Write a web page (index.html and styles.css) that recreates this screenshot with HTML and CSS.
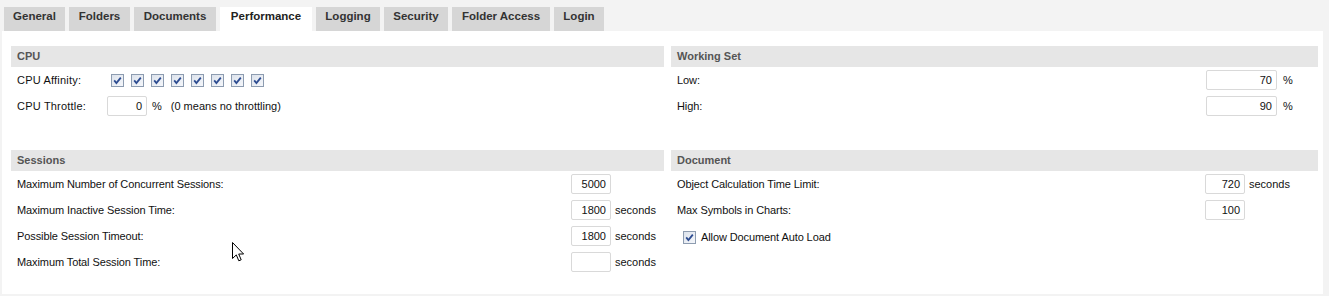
FILE: index.html
```html
<!DOCTYPE html>
<html>
<head>
<meta charset="utf-8">
<link rel="stylesheet" href="styles.css">
</head>
<body>
<div class="tabs">
  <div class="tab t-general">General</div>
  <div class="tab t-folders">Folders</div>
  <div class="tab t-documents">Documents</div>
  <div class="tab t-performance active">Performance</div>
  <div class="tab t-logging">Logging</div>
  <div class="tab t-security">Security</div>
  <div class="tab t-access">Folder Access</div>
  <div class="tab t-login">Login</div>
</div>
<div class="panel">
  <div class="grid">
    <section class="sec">
      <div class="hdr">CPU</div>
      <div class="row">
        <span class="lbl cpu-lbl">CPU Affinity:</span>
        <span class="cbs">
          <span class="cb"><svg viewBox="0 0 13 13"><path d="M3.2 6.4 L5.4 9 L9.8 3.6" /></svg></span>
          <span class="cb"><svg viewBox="0 0 13 13"><path d="M3.2 6.4 L5.4 9 L9.8 3.6" /></svg></span>
          <span class="cb"><svg viewBox="0 0 13 13"><path d="M3.2 6.4 L5.4 9 L9.8 3.6" /></svg></span>
          <span class="cb"><svg viewBox="0 0 13 13"><path d="M3.2 6.4 L5.4 9 L9.8 3.6" /></svg></span>
          <span class="cb"><svg viewBox="0 0 13 13"><path d="M3.2 6.4 L5.4 9 L9.8 3.6" /></svg></span>
          <span class="cb"><svg viewBox="0 0 13 13"><path d="M3.2 6.4 L5.4 9 L9.8 3.6" /></svg></span>
          <span class="cb"><svg viewBox="0 0 13 13"><path d="M3.2 6.4 L5.4 9 L9.8 3.6" /></svg></span>
          <span class="cb"><svg viewBox="0 0 13 13"><path d="M3.2 6.4 L5.4 9 L9.8 3.6" /></svg></span>
        </span>
      </div>
      <div class="row">
        <span class="lbl cpu-lbl">CPU Throttle:</span>
        <span class="inp w40">0</span>
        <span class="pct">%</span>
        <span class="note">(0 means no throttling)</span>
      </div>
    </section>
    <section class="sec">
      <div class="hdr">Working Set</div>
      <div class="row">
        <span class="lbl grow">Low:</span>
        <span class="inp w71">70</span>
        <span class="unit u-ws">%</span>
      </div>
      <div class="row">
        <span class="lbl grow">High:</span>
        <span class="inp w71">90</span>
        <span class="unit u-ws">%</span>
      </div>
    </section>
    <section class="sec">
      <div class="hdr">Sessions</div>
      <div class="row">
        <span class="lbl grow">Maximum Number of Concurrent Sessions:</span>
        <span class="inp w40">5000</span>
        <span class="unit u-ses"></span>
      </div>
      <div class="row">
        <span class="lbl grow">Maximum Inactive Session Time:</span>
        <span class="inp w40">1800</span>
        <span class="unit u-ses">seconds</span>
      </div>
      <div class="row">
        <span class="lbl grow">Possible Session Timeout:</span>
        <span class="inp w40">1800</span>
        <span class="unit u-ses">seconds</span>
      </div>
      <div class="row">
        <span class="lbl grow">Maximum Total Session Time:</span>
        <span class="inp w40"></span>
        <span class="unit u-ses">seconds</span>
      </div>
    </section>
    <section class="sec">
      <div class="hdr">Document</div>
      <div class="row">
        <span class="lbl grow">Object Calculation Time Limit:</span>
        <span class="inp w40">720</span>
        <span class="unit u-doc">seconds</span>
      </div>
      <div class="row">
        <span class="lbl grow">Max Symbols in Charts:</span>
        <span class="inp w40">100</span>
        <span class="unit u-doc"></span>
      </div>
      <div class="row">
        <span class="chk-wrap">
          <span class="cb"><svg viewBox="0 0 13 13"><path d="M3.2 6.4 L5.4 9 L9.8 3.6" /></svg></span>
          <span class="chk-lbl">Allow Document Auto Load</span>
        </span>
      </div>
    </section>
  </div>
</div>
<svg class="cursor" width="13" height="21" viewBox="0 0 13 21"><path d="M0.5 0.5 L0.5 16.5 L4.3 12.9 L6.8 18.8 L9.2 17.8 L6.7 12 L11.6 12 Z" fill="#fff" stroke="#000" stroke-width="1" stroke-linejoin="miter"/></svg>
</body>
</html>
```

FILE: styles.css
```css
html, body {
  margin: 0;
  padding: 0;
}
body {
  background: #f3f3f3;
  font-family: "Liberation Sans", Arial, sans-serif;
  font-size: 11px;
  color: #111;
  width: 1329px;
  height: 296px;
  position: relative;
  overflow: hidden;
}
.tabs {
  display: flex;
  gap: 4px;
  padding: 7px 0 0 4px;
  height: 24px;
}
.tab {
  background: #d6d6d6;
  color: #333;
  font-weight: bold;
  font-size: 11.5px;
  height: 24px;
  line-height: 19px;
  text-align: center;
  box-sizing: border-box;
}
.t-general { width: 61px; }
.t-folders { width: 61px; }
.t-documents { width: 82px; }
.t-performance { width: 92px; }
.t-logging { width: 64px; }
.t-security { width: 64px; }
.t-access { width: 98px; }
.t-login { width: 50px; }
.tab.active {
  background: #fff;
  color: #222;
}
.panel {
  background: #fff;
  margin-left: 2px;
  width: 1321px;
  height: 263px;
  box-sizing: border-box;
  padding: 15px 5px 0 9px;
}
.grid {
  display: grid;
  grid-template-columns: 653px 647px;
  grid-template-rows: 104px auto;
  column-gap: 7px;
}
.hdr {
  background: #e6e6e6;
  color: #555;
  font-weight: bold;
  height: 21px;
  line-height: 20px;
  padding-left: 6px;
}
.row {
  height: 26px;
  display: flex;
  align-items: center;
}
.lbl {
  padding-left: 6px;
  white-space: nowrap;
  letter-spacing: -0.1px;
}
.grow {
  flex: 1;
}
.cpu-lbl {
  width: 90px;
  flex: none;
  letter-spacing: 0.2px;
}
.cbs {
  display: flex;
  gap: 7px;
  margin-left: 4px;
}
.cb {
  width: 13px;
  height: 13px;
  box-sizing: border-box;
  border: 1px solid #8d9cb0;
  background: linear-gradient(135deg, #dde3ec 0%, #f4f6fa 100%);
  display: inline-block;
  position: relative;
}
.cb svg {
  position: absolute;
  left: -1px;
  top: -1px;
  width: 13px;
  height: 13px;
}
.cb path {
  fill: none;
  stroke: #2d4c91;
  stroke-width: 1.8;
}
.inp {
  height: 20px;
  box-sizing: border-box;
  border: 1px solid #d9d9d9;
  border-radius: 2px;
  background: #fff;
  text-align: right;
  padding-right: 4px;
  line-height: 18px;
  flex: none;
}
.w40 { width: 40px; }
.w71 { width: 71px; }
.pct {
  margin-left: 5px;
}
.note {
  margin-left: 9px;
}
.unit {
  flex: none;
  padding-left: 4px;
  box-sizing: border-box;
}
.u-ses { width: 53px; }
.u-doc { width: 73px; }
.u-ws { width: 41px; padding-left: 6px; }
.chk-wrap {
  display: flex;
  align-items: center;
  padding-left: 12px;
  margin-top: 2px;
}
.chk-lbl {
  margin-left: 5px;
  letter-spacing: -0.1px;
}
.cursor {
  position: absolute;
  left: 232px;
  top: 242px;
}
```
